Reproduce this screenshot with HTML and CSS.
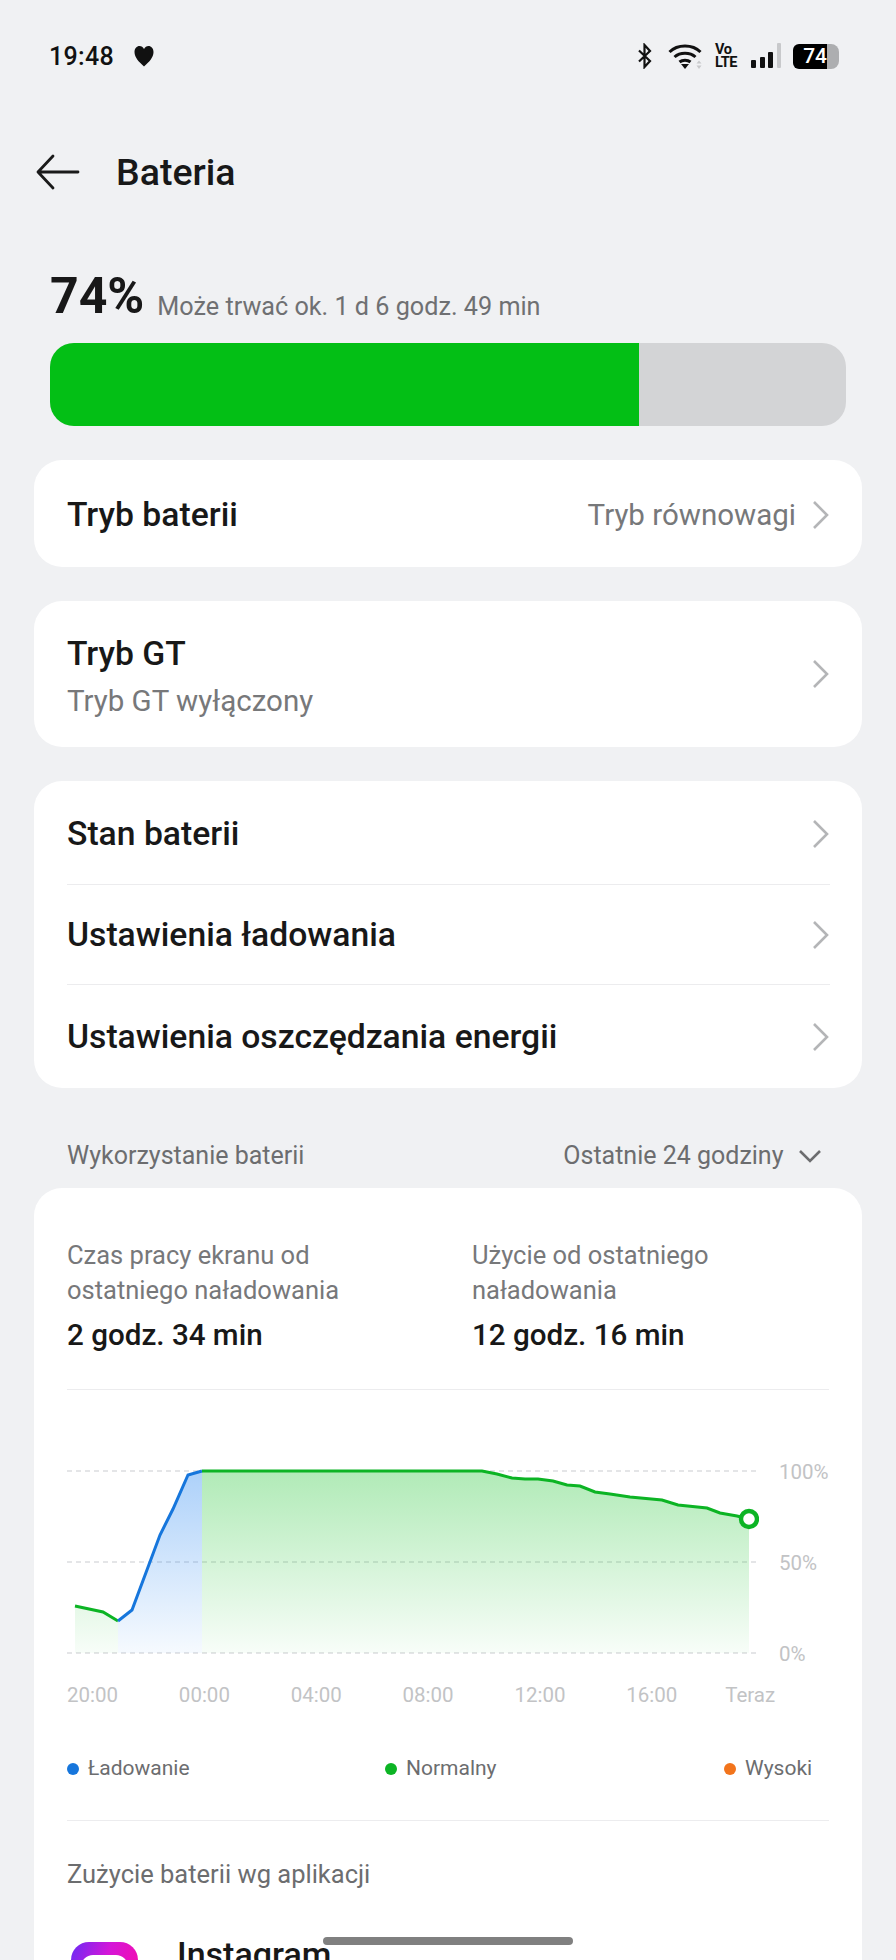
FILE: index.html
```html
<!doctype html>
<html lang="pl">
    <head>
        <meta charset="UTF-8">
        <meta name="viewport" content="width=device-width, initial-scale=1.0">
        <title>Bateria</title>
        <link rel="stylesheet" href="styles.css">
    </head>
    <body>
        <div class="status">
            <div class="status-left">
                <span class="time">19:48</span>
                <svg class="heart" width="24" height="22" viewBox="0 0 24 22"><path d="M12 21.500C7 17 2.500 12.500 2.500 7 2.500 3.500 4.800 1 7.500 1 9.500 1 11 2 12 4 13 2 14.500 1 16.500 1 19.200 1 21.500 3.500 21.500 7 21.500 12.500 17 17 12 21.500Z" fill="#111"/></svg>
            </div>
            <div class="status-right">
                <svg width="18" height="26" viewBox="0 0 18 26"><path d="M3 7.500 14 18 8.500 24V2L14 8 3 18.500" fill="none" stroke="#111" stroke-width="2.200"/></svg>
                <svg class="wifi" width="36" height="26" viewBox="0 0 36 26">
                    <path d="M1.500 9C9.500 1 24.500 1 32.500 9M6.500 14C12 9 22 9 27.500 14M11.500 19C14.500 16.500 19.500 16.500 22.500 19" fill="none" stroke="#111" stroke-width="3"/>
                    <path d="M13 21H21L17 26Z" fill="#111"/>
                    <path d="M31 17.500 33.500 20.500H28.500ZM31 26 33.500 22.500H28.500Z" fill="#c8c9cb"/>
                </svg>
                <span class="volte">Vo<br>LTE</span>
                <svg width="32" height="26" viewBox="0 0 32 26">
                    <rect x="1" y="17" width="5" height="8" rx="1" fill="#111"/>
                    <rect x="10" y="14" width="5" height="11" rx="1" fill="#111"/>
                    <rect x="18" y="9" width="5" height="16" rx="1" fill="#111"/>
                    <rect x="27" y="0" width="4" height="25" rx="1" fill="#c8c9cb"/>
                </svg>
                <div class="batt-icon">
                    <span class="batt-num">74</span>
                    <span class="batt-rest"></span>
                </div>
            </div>
        </div>

        <header class="topbar">
            <svg width="46" height="36" viewBox="0 0 46 36"><path d="M19 2 4 18 19 34M4 18H44" fill="none" stroke="#1a1a1a" stroke-width="2.800" stroke-linecap="round" stroke-linejoin="round"/></svg>
            <h1>Bateria</h1>
        </header>

        <section class="level">
            <div class="level-text">
                <span class="percent">74%</span>
                <span class="remain">Może trwać ok. 1 d 6 godz. 49 min</span>
            </div>
            <div class="bar"><div class="bar-fill" style="width: 74%"></div></div>
        </section>

        <div class="card">
            <div class="row row-single">
                <span class="row-title">Tryb baterii</span>
                <span class="row-value">Tryb równowagi</span>
                <svg class="chev" width="18" height="30" viewBox="0 0 18 30"><path d="M2 2 15 15 2 28" fill="none" stroke="#b4b5b7" stroke-width="2.600"/></svg>
            </div>
        </div>

        <div class="card">
            <div class="row row-gt">
                <div class="row-stack">
                    <span class="row-title">Tryb GT</span>
                    <span class="row-sub">Tryb GT wyłączony</span>
                </div>
                <svg class="chev" width="18" height="30" viewBox="0 0 18 30"><path d="M2 2 15 15 2 28" fill="none" stroke="#b4b5b7" stroke-width="2.600"/></svg>
            </div>
        </div>

        <div class="card">
            <div class="row row-line row-first">
                <span class="row-title">Stan baterii</span>
                <svg class="chev" width="18" height="30" viewBox="0 0 18 30"><path d="M2 2 15 15 2 28" fill="none" stroke="#b4b5b7" stroke-width="2.600"/></svg>
            </div>
            <div class="row row-line">
                <span class="row-title">Ustawienia ładowania</span>
                <svg class="chev" width="18" height="30" viewBox="0 0 18 30"><path d="M2 2 15 15 2 28" fill="none" stroke="#b4b5b7" stroke-width="2.600"/></svg>
            </div>
            <div class="row row-line row-last">
                <span class="row-title">Ustawienia oszczędzania energii</span>
                <svg class="chev" width="18" height="30" viewBox="0 0 18 30"><path d="M2 2 15 15 2 28" fill="none" stroke="#b4b5b7" stroke-width="2.600"/></svg>
            </div>
        </div>

        <div class="usage-head">
            <span>Wykorzystanie baterii</span>
            <div class="usage-range">
                <span>Ostatnie 24 godziny</span>
                <svg width="24" height="14" viewBox="0 0 24 14"><path d="M2 2 12 12 22 2" fill="none" stroke="#6c6d6f" stroke-width="2.600"/></svg>
            </div>
        </div>

        <div class="card usage">
            <div class="stats">
                <div class="stat">
                    <p class="stat-label">Czas pracy ekranu od ostatniego naładowania</p>
                    <p class="stat-value">2 godz. 34 min</p>
                </div>
                <div class="stat">
                    <p class="stat-label">Użycie od ostatniego naładowania</p>
                    <p class="stat-value">12 godz. 16 min</p>
                </div>
            </div>

            <div class="chart">
                <svg class="plot" width="692" height="200" viewBox="67 1462 692 200">
                    <defs>
                        <linearGradient id="gradGreen" gradientUnits="userSpaceOnUse" x1="0" y1="1472" x2="0" y2="1654">
                            <stop offset="0" stop-color="#0abf1e" stop-opacity="0.32"/>
                            <stop offset="1" stop-color="#0abf1e" stop-opacity="0.03"/>
                        </linearGradient>
                        <linearGradient id="gradBlue" gradientUnits="userSpaceOnUse" x1="0" y1="1472" x2="0" y2="1654">
                            <stop offset="0" stop-color="#1b7ff0" stop-opacity="0.36"/>
                            <stop offset="1" stop-color="#1b7ff0" stop-opacity="0.04"/>
                        </linearGradient>
                    </defs>
                    <g stroke="#dcdde0" stroke-width="1.500" stroke-dasharray="5 4">
                        <path d="M67 1472H758M67 1563H758M67 1654H758"/>
                    </g>
                    <path d="M75 1654V1607L103 1613 118 1622V1654Z" fill="url(#gradGreen)"/>
                    <path d="M118 1654V1622L132 1611 160 1536 173 1510 188 1476 202 1472V1654Z" fill="url(#gradBlue)"/>
                    <path d="M202 1654V1472H482L497 1475 512 1479 525 1480 538 1480 553 1482 567 1486 580 1487 595 1493 610 1495 630 1498 662 1501 678 1506 707 1509 720 1514 737 1517 749 1520V1654Z" fill="url(#gradGreen)"/>
                    <path d="M75 1607 103 1613 118 1622" fill="none" stroke="#0cb424" stroke-width="3"/>
                    <path d="M118 1622 132 1611 160 1536 173 1510 188 1476 202 1472" fill="none" stroke="#1676dc" stroke-width="3"/>
                    <path d="M202 1472H482L497 1475 512 1479 525 1480 538 1480 553 1482 567 1486 580 1487 595 1493 610 1495 630 1498 662 1501 678 1506 707 1509 720 1514 737 1517 749 1520" fill="none" stroke="#0cb424" stroke-width="3"/>
                    <circle cx="749" cy="1520" r="8" fill="#fff" stroke="#0cb424" stroke-width="4.400"/>
                </svg>
                <div class="y-labels">
                    <span>100%</span>
                    <span>50%</span>
                    <span>0%</span>
                </div>
            </div>

            <div class="x-labels">
                <span>20:00</span>
                <span>00:00</span>
                <span>04:00</span>
                <span>08:00</span>
                <span>12:00</span>
                <span>16:00</span>
                <span class="x-now">Teraz</span>
            </div>

            <div class="legend">
                <span class="legend-item"><i class="dot dot-blue"></i>Ładowanie</span>
                <span class="legend-item"><i class="dot dot-green"></i>Normalny</span>
                <span class="legend-item"><i class="dot dot-orange"></i>Wysoki</span>
            </div>

            <div class="apps-title">Zużycie baterii wg aplikacji</div>
            <div class="app-row">
                <div class="app-icon"><div class="app-icon-inner"></div></div>
                <span class="app-name">Instagram</span>
            </div>
        </div>

        <div class="home-pill"></div>
    </body>
</html>
```

FILE: styles.css
```css
html, body {
    margin: 0;
    height: 1960px;
    overflow: hidden;
}
body {
    position: relative;
    background: #f0f1f3;
    font-family: Roboto, "Noto Sans", sans-serif;
    color: #181818;
}
p, h1 {
    margin: 0;
}

.status {
    display: flex;
    justify-content: space-between;
    align-items: center;
    height: 32px;
    padding: 40px 57px 0 49px;
}
.status-left {
    display: flex;
    align-items: center;
    gap: 18px;
}
.time {
    font-size: 25px;
    font-weight: 500;
    letter-spacing: 0.3px;
    color: #111;
}
.status-right {
    display: flex;
    align-items: center;
    gap: 11px;
}
.wifi {
    margin-left: 3px;
}
.volte {
    font-size: 14.500px;
    font-weight: 700;
    line-height: 13px;
    letter-spacing: -0.500px;
    color: #111;
    width: 24px;
}
.batt-icon {
    display: flex;
    width: 46px;
    height: 25px;
    border-radius: 6px 8px 8px 6px;
    overflow: hidden;
}
.batt-num {
    flex: 1;
    background: #000;
    color: #fff;
    font-size: 21px;
    font-weight: 500;
    line-height: 25px;
    text-align: right;
}
.batt-rest {
    width: 12px;
    background: #adaeb0;
}

.topbar {
    display: flex;
    align-items: center;
    gap: 36px;
    height: 44px;
    padding: 78px 0 0 34px;
}
.topbar h1 {
    font-size: 37.500px;
    font-weight: 500;
    color: #181818;
}

.level {
    padding: 0 50px;
    margin-top: 75px;
}
.level-text {
    display: flex;
    align-items: baseline;
    gap: 13px;
    height: 54px;
    line-height: 54px;
}
.percent {
    font-size: 50px;
    font-weight: 700;
    color: #181818;
}
.remain {
    font-size: 25.200px;
    color: #6f7072;
    transform: translateY(2px);
}
.bar {
    height: 83px;
    margin-top: 20px;
    background: #d3d4d6;
    border-radius: 24px;
    overflow: hidden;
}
.bar-fill {
    height: 100%;
    background: #03bf15;
}

.card {
    margin: 34px 34px 0;
    background: #fff;
    border-radius: 28px;
}
.row {
    display: flex;
    align-items: center;
    margin: 0 32px 0 33px;
}
.row-single {
    height: 107px;
    padding-top: 2px;
    box-sizing: border-box;
}
.row-title {
    flex: 1;
    font-size: 33.700px;
    font-weight: 500;
    line-height: 40px;
    color: #181818;
}
.row-value {
    font-size: 29.500px;
    color: #77787a;
    margin-right: 16px;
}
.row-gt {
    height: 146px;
}
.row-stack {
    flex: 1;
    display: flex;
    flex-direction: column;
    gap: 10px;
    padding-top: 4px;
}
.row-sub {
    font-size: 29.500px;
    line-height: 34px;
    color: #77787a;
}
.row-line {
    height: 100px;
    box-sizing: border-box;
    border-bottom: 1px solid #ececee;
}
.row-first {
    height: 104px;
    padding-top: 3px;
}
.row-last {
    height: 103px;
    border-bottom: none;
}

.usage-head {
    display: flex;
    justify-content: space-between;
    align-items: center;
    margin: 53px 74px 0 67px;
    font-size: 25px;
    line-height: 29px;
    color: #6c6d6f;
}
.usage-range {
    display: flex;
    align-items: center;
    gap: 14.500px;
}
.card.usage {
    margin-top: 18px;
    margin-bottom: 0;
    height: 772px;
    box-sizing: border-box;
    border-radius: 28px 28px 0 0;
    padding: 50px 33px 0;
    overflow: hidden;
}
.stats {
    display: flex;
    height: 152px;
    box-sizing: border-box;
    border-bottom: 1px solid #ececee;
}
.stat {
    width: 405px;
    flex: none;
}
.stat-label {
    font-size: 25.500px;
    line-height: 35px;
    color: #77787a;
    width: 310px;
}
.stat-value {
    font-size: 29.600px;
    font-weight: 500;
    line-height: 34px;
    margin-top: 10px;
    color: #181818;
}
.chart {
    display: flex;
    margin-top: 71px;
    margin-right: -40px;
}
.plot {
    display: block;
    flex: none;
}
.y-labels {
    display: flex;
    flex-direction: column;
    justify-content: space-between;
    height: 206px;
    margin: -1px 0 0 20px;
    font-size: 20.500px;
    line-height: 24px;
    color: #c2c3c5;
}
.x-labels {
    display: flex;
    gap: 60.800px;
    margin-top: 17px;
    font-size: 20.500px;
    line-height: 24px;
    color: #c2c3c5;
}
.x-now {
    margin-left: -13px;
}
.legend {
    display: grid;
    grid-template-columns: 318px 339px auto;
    margin-top: 49px;
    padding-bottom: 39px;
    border-bottom: 1px solid #ececee;
    font-size: 21px;
    line-height: 25px;
    color: #6c6d6f;
}
.legend-item {
    display: flex;
    align-items: center;
    gap: 9px;
}
.dot {
    width: 12px;
    height: 12px;
    border-radius: 50%;
}
.dot-blue { background: #1676dc; }
.dot-green { background: #0cb424; }
.dot-orange { background: #f2741c; }
.apps-title {
    margin-top: 38px;
    font-size: 25.500px;
    line-height: 30px;
    color: #6c6d6f;
}
.app-row {
    display: flex;
    align-items: flex-start;
    gap: 39px;
    margin-top: 53px;
    padding-left: 4px;
}
.app-icon {
    width: 67px;
    height: 67px;
    box-sizing: border-box;
    padding: 13px 10px;
    border-radius: 18px;
    background: linear-gradient(110deg, #6a2bf5, #d416d8 45%, #ff0aa0);
}
.app-icon-inner {
    height: 42px;
    border-radius: 12px;
    background: #fff;
}
.app-name {
    font-size: 34px;
    font-weight: 500;
    line-height: 40px;
    margin-top: -8px;
}
.home-pill {
    position: absolute;
    left: 323px;
    top: 1937px;
    width: 250px;
    height: 8px;
    border-radius: 4px;
    background: #808080;
}
```
